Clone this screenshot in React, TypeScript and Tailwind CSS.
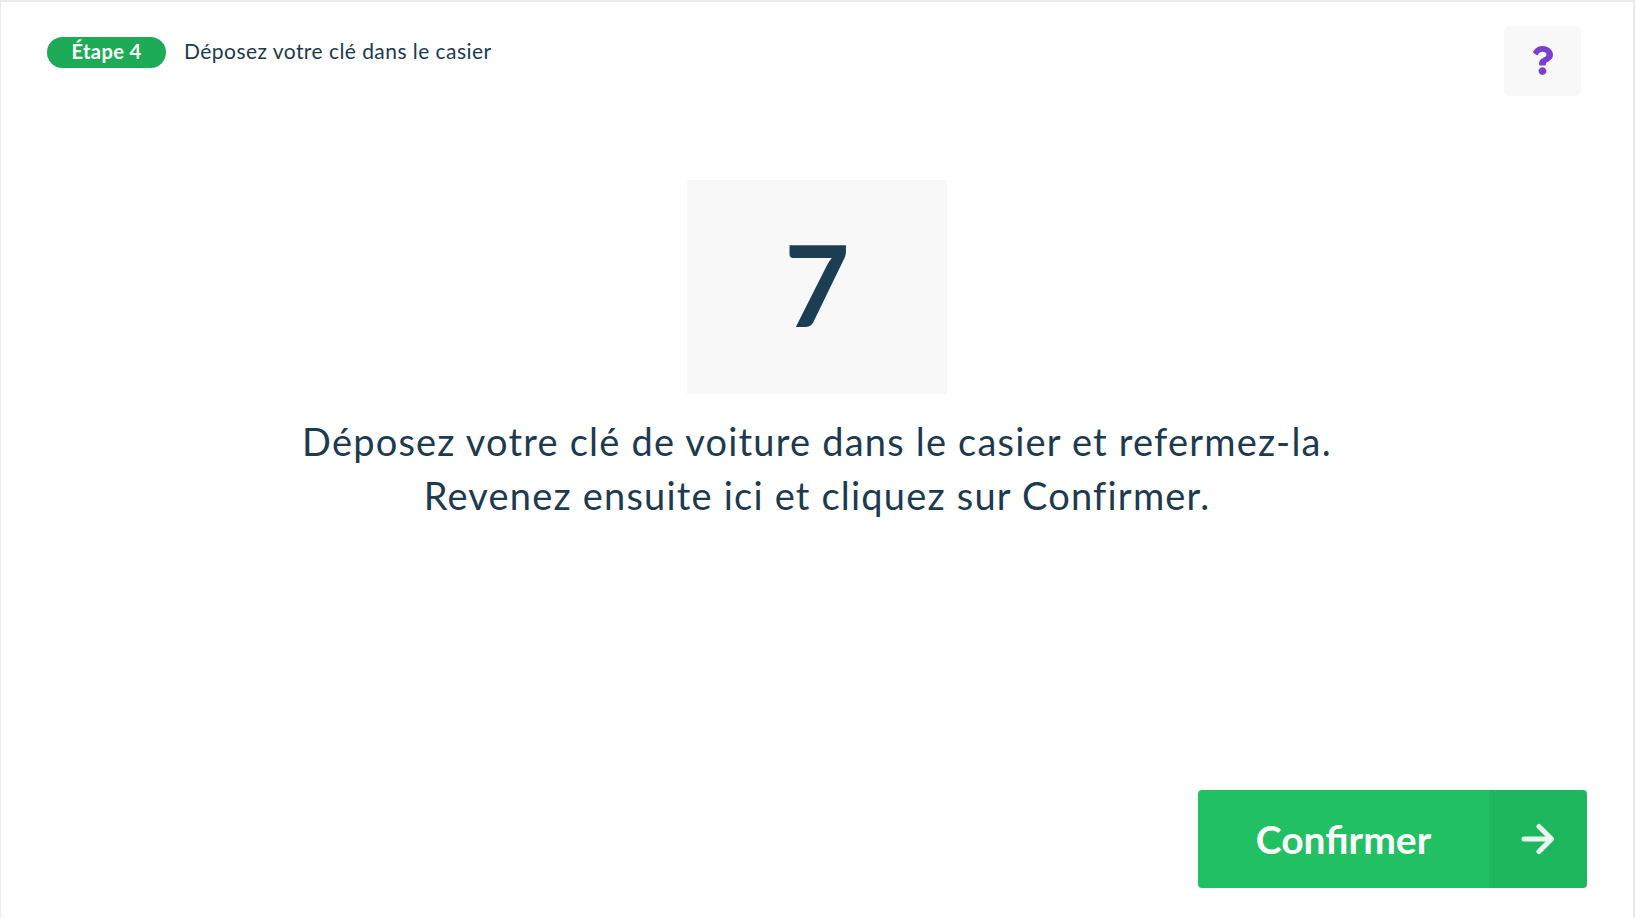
import React from "react";
import { FaQuestion } from "react-icons/fa";

export default function App() {
  const font = { fontFamily: "Lato, 'Noto Sans', sans-serif" };
  return (
    <div className="w-[1635px] h-[918px] bg-[#ebebeb] pt-[2px] pl-[1px] pr-[2px] overflow-hidden" style={font}>
      <div className="bg-white h-[916px] flex flex-col">
        <div className="flex justify-between items-start pt-[24px] pl-[46px] pr-[52px]">
          <div className="flex items-center gap-[18px] mt-[11px]">
            <span className="h-[31px] w-[119px] rounded-full bg-[#1eab57] text-white font-bold text-[20px] tracking-[0.4px] flex items-center justify-center pb-[4px]">
              Étape 4
            </span>
            <span className="text-[#1d3a4f] text-[21px] tracking-[0.45px] leading-none mb-[5px]">Déposez votre clé dans le casier</span>
          </div>
          <button className="w-[77px] h-[70px] rounded-[5px] bg-[#f8f8f8] flex items-center justify-center text-[#7b3fd0] pb-[1px]">
            <FaQuestion size={29} />
          </button>
        </div>
        <div className="flex flex-col items-center mt-[84px]">
          <div className="w-[260px] h-[214px] bg-[#f8f8f8] flex items-center justify-center pb-[8px] text-[#1b3e52] text-[113px] font-bold leading-none">
            7
          </div>
          <p className="mt-[20px] text-center text-[#1d3a4f] text-[38px] tracking-[1.2px] leading-[54px]">
            Déposez votre clé de voiture dans le casier et refermez-la.
            <br />
            Revenez ensuite ici et cliquez sur Confirmer.
          </p>
        </div>
        <div className="flex-1" />
        <div className="flex justify-end pb-[30px] pr-[46px]">
          <button className="flex h-[98px] w-[389px] rounded-[4px] overflow-hidden">
            <span className="flex-1 bg-[#21c063] text-white font-bold text-[39px] flex items-center justify-center">
              Confirmer
            </span>
            <span className="w-[98px] bg-[#1eb75d] flex items-center justify-center">
              <svg width="34" height="32" viewBox="0 0 34 32" fill="none" stroke="#e9f8ef" strokeWidth="5" strokeLinecap="round" strokeLinejoin="round">
                <path d="M3 16h27" />
                <path d="M18 3.5 30.5 16 18 28.5" />
              </svg>
            </span>
          </button>
        </div>
      </div>
    </div>
  );
}
